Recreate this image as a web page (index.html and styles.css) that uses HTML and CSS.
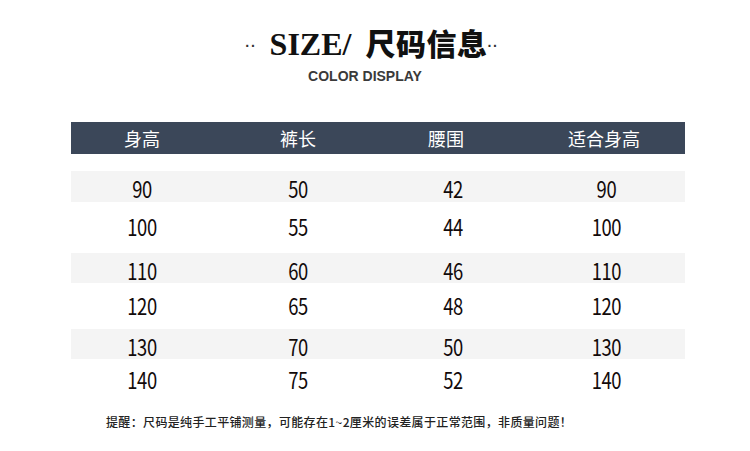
FILE: index.html
```html
<!DOCTYPE html>
<html lang="zh">
<head>
<meta charset="utf-8">
<title>SIZE 尺码信息</title>
<link rel="stylesheet" href="styles.css">
</head>
<body>
<div class="page">
  <header class="heading">
    <h1 class="title"><span class="dots">··</span><span class="en">SIZE/</span><span class="zh">尺码信息</span><span class="dots dots-r">··</span></h1>
    <p class="subtitle">COLOR DISPLAY</p>
  </header>

  <div class="table">
    <div class="row head">
      <div class="cell c1">身高</div>
      <div class="cell c2">裤长</div>
      <div class="cell c3">腰围</div>
      <div class="cell c4">适合身高</div>
    </div>
    <div class="row r1 shade">
      <div class="cell c1">90</div><div class="cell c2">50</div><div class="cell c3">42</div><div class="cell c4">90</div>
    </div>
    <div class="row r2">
      <div class="cell c1">100</div><div class="cell c2">55</div><div class="cell c3">44</div><div class="cell c4">100</div>
    </div>
    <div class="row r3 shade">
      <div class="cell c1">110</div><div class="cell c2">60</div><div class="cell c3">46</div><div class="cell c4">110</div>
    </div>
    <div class="row r4">
      <div class="cell c1">120</div><div class="cell c2">65</div><div class="cell c3">48</div><div class="cell c4">120</div>
    </div>
    <div class="row r5 shade">
      <div class="cell c1">130</div><div class="cell c2">70</div><div class="cell c3">50</div><div class="cell c4">130</div>
    </div>
    <div class="row r6">
      <div class="cell c1">140</div><div class="cell c2">75</div><div class="cell c3">52</div><div class="cell c4">140</div>
    </div>
  </div>

  <p class="note">提醒：尺码是纯手工平铺测量，可能存在1~2厘米的误差属于正常范围，非质量问题！</p>
</div>
</body>
</html>
```

FILE: styles.css
```css
* { box-sizing: border-box; }
html, body { margin: 0; padding: 0; background: #ffffff; }
body { width: 750px; height: 451px; overflow: hidden; }

.page {
  display: flex;
  flex-direction: column;
  align-items: flex-start;
}

.heading {
  width: 750px;
  display: flex;
  flex-direction: column;
  align-items: center;
}

.title {
  margin: 26px 0 0 0;
  height: 34px;
  display: flex;
  align-items: baseline;
  color: #111;
  padding-right: 6px;
  font-weight: bold;
}
.title .en {
  font-family: "Liberation Serif", serif;
  font-size: 32px;
  line-height: 32px;
}
.title .zh {
  font-family: "Noto Sans CJK SC", sans-serif;
  font-size: 30px;
  line-height: 32px;
  font-weight: 900;
  margin-left: 14px;
  letter-spacing: 0.5px;
}
.title .dots {
  align-self: center;
  font-family: "Liberation Sans", sans-serif;
  font-size: 14px;
  line-height: 14px;
  font-weight: bold;
  color: #333;
  letter-spacing: 1px;
  margin-right: 13px;
  position: relative;
  top: 3px;
}
.title .dots-r { margin-right: 0; }

.subtitle {
  margin: 8px 0 0 0;
  padding-right: 20px;
  font-family: "Liberation Sans", sans-serif;
  font-weight: bold;
  font-size: 14px;
  line-height: 16px;
  color: #3a3a3a;
}

.table {
  margin: 38px 0 0 71px;
  width: 614px;
  display: flex;
  flex-direction: column;
}

.row {
  display: grid;
  grid-template-columns: 142px 170px 140px 162px;
  align-items: center;
}
.cell {
  text-align: center;
}

.head {
  height: 32px;
  background: #3b4759;
  color: #ffffff;
  font-family: "Noto Sans CJK SC", sans-serif;
  font-size: 18px;
  line-height: 32px;
  margin-bottom: 17px;
}
.head .c3 { padding-right: 14px; }

.row:not(.head) {
  font-family: "Noto Sans CJK SC", sans-serif;
  font-weight: 400;
  font-size: 23px;
  letter-spacing: -0.5px;
  color: #120a0a;
}
.row:not(.head) .cell { transform: scaleX(0.8); padding-bottom: 3px; }
.row:not(.head) .c4 { padding-left: 6px; }

.shade { background: #f4f4f4; }
.r1 { height: 31px; }
.r2 { height: 51px; }
.r3 { height: 30px; }
.r4 { height: 46px; }
.r5 { height: 30px; }
.r6 { height: 42px; }

.note {
  margin: 13px 0 0 106px;
  font-family: "Noto Sans CJK SC", sans-serif;
  font-size: 12px;
  line-height: 16px;
  font-weight: 500;
  color: #222;
  letter-spacing: 0.35px;
}
```
